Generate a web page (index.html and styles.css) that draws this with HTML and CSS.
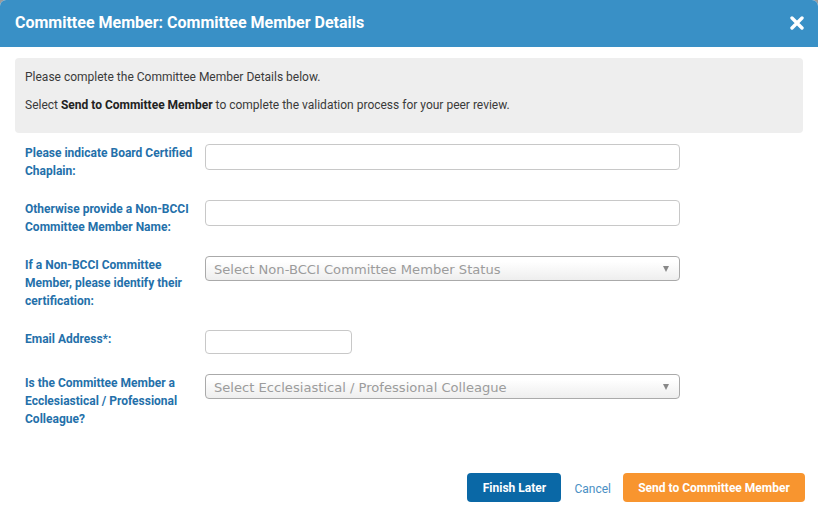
FILE: index.html
```html
<!DOCTYPE html>
<html>
<head>
<meta charset="utf-8">
<link rel="stylesheet" href="styles.css">
</head>
<body>
<div class="dialog">
  <div class="header">
    <div class="title">Committee Member: Committee Member Details</div>
    <svg class="close" width="14" height="14" viewBox="0 0 14 14"><path d="M2 2L12 12M12 2L2 12" stroke="#fff" stroke-width="3.4" stroke-linecap="round"/></svg>
  </div>
  <div class="content">
    <div class="info">
      <p>Please complete the Committee Member Details below.</p>
      <p>Select <b>Send to Committee Member</b> to complete the validation process for your peer review.</p>
    </div>
    <div class="form">
      <div class="row">
        <label class="lbl">Please indicate Board Certified Chaplain:</label>
        <input class="inp wide" type="text">
      </div>
      <div class="row">
        <label class="lbl">Otherwise provide a Non-BCCI Committee Member Name:</label>
        <input class="inp wide" type="text">
      </div>
      <div class="row">
        <label class="lbl">If a Non-BCCI Committee Member, please identify their certification:</label>
        <div class="sel"><span>Select Non-BCCI Committee Member Status</span><i class="arrow"></i></div>
      </div>
      <div class="row">
        <label class="lbl">Email Address*:</label>
        <input class="inp short" type="text">
      </div>
      <div class="row">
        <label class="lbl">Is the Committee Member a Ecclesiastical / Professional Colleague?</label>
        <div class="sel"><span>Select Ecclesiastical / Professional Colleague</span><i class="arrow"></i></div>
      </div>
    </div>
    <div class="actions">
      <button class="btn blue">Finish Later</button>
      <a class="cancel">Cancel</a>
      <button class="btn orange">Send to Committee Member</button>
    </div>
  </div>
</div>
</body>
</html>
```
FILE: styles.css
```css
html { background: #9a9a9a; }
body { margin: 0; font-family: Roboto, "Liberation Sans", sans-serif; }
.dialog { width: 818px; height: 521px; background: #fff; border-radius: 6px 6px 0 0; overflow: hidden; box-sizing: border-box; }
.header { height: 47px; background: #3990c6; display: flex; align-items: center; justify-content: space-between; padding: 0 15px 2px 15px; box-sizing: border-box; }
.title { color: #fff; font-weight: 700; font-size: 16px; }
.close { margin-right: -1px; }
.content { padding: 11px 15px 0 15px; }
.info { background: #eeeeee; border-radius: 4px; padding: 11px 10px 10px 10px; height: 75px; box-sizing: border-box; font-size: 12px; color: #3a3a3a; }
.info p { margin: 0 0 11px 0; line-height: 17px; }
.info b { font-weight: 700; color: #222; }
.form { padding: 11px 0 0 10px; display: flex; flex-direction: column; gap: 20px; }
.row { display: flex; align-items: flex-start; }
.lbl { width: 180px; font-size: 12px; font-weight: 700; color: #2470aa; line-height: 18px; }
.inp { height: 26px; box-sizing: border-box; border: 1px solid #c8c8c8; border-radius: 4px; margin: 0; padding: 0 6px; background: #fff; }
.inp.wide { width: 475px; }
.inp.short { width: 147px; height: 24px; }
.sel { width: 475px; height: 25px; box-sizing: border-box; border: 1px solid #aaa; border-radius: 4px; background: linear-gradient(#ffffff 20%, #eeeeee 100%); display: flex; align-items: center; justify-content: space-between; padding: 1px 10px 0 8px; font-family: "DejaVu Sans", Verdana, sans-serif; font-size: 13.1px; color: #9c9c9c; }
.arrow { width: 0; height: 0; border-left: 3.5px solid transparent; border-right: 3.5px solid transparent; border-top: 6px solid #888; }
.actions { display: flex; justify-content: flex-end; align-items: center; margin-top: 45px; margin-right: -2px; }
.btn { border: none; border-radius: 4px; height: 29px; color: #fff; font-family: Roboto, "Liberation Sans", sans-serif; font-weight: 700; font-size: 12px; padding: 0; }
.btn.blue { background: #0a68a6; width: 94px; }
.btn.orange { background: #f8952f; width: 182px; }
.cancel { color: #4a8fc4; font-size: 12px; margin: 2px 12px 0 13px; }
```
